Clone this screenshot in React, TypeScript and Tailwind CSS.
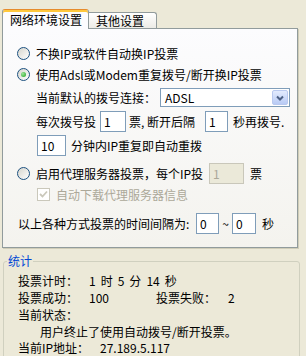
import React from "react";

function Radio({ checked }: { checked?: boolean }) {
  return (
    <span className="w-[13px] h-[13px] shrink-0 rounded-full border border-[#1c5180] bg-gradient-to-br from-[#d6d5cd] to-white flex items-center justify-center">
      {checked && (
        <span className="w-[5px] h-[5px] rounded-full bg-[radial-gradient(circle_at_35%_35%,#9be598,#21a121)]" />
      )}
    </span>
  );
}

function Box({ w, value, disabled }: { w: string; value: string; disabled?: boolean }) {
  return (
    <span
      className={
        disabled
          ? `${w} h-[21px] shrink-0 border border-[#c9c7ba] bg-[#ebe9d9] text-[#aca899] pl-[3px] flex items-center`
          : `${w} h-[21px] shrink-0 border border-[#7f9db9] bg-white pl-[3px] flex items-center`
      }
    >
      {value}
    </span>
  );
}

export default function App() {
  return (
    <div className="w-[306px] h-[356px] overflow-hidden bg-[#ece9d8] text-[12px] leading-[14px] text-black [font-family:'Noto_Sans_CJK_SC',sans-serif]">
      <div className="pl-[2px] pt-[9px] w-[298px]">
        {/* tabs */}
        <div className="flex items-end h-[19px]">
          <div className="relative z-10 w-[87px] h-[20px] -mb-px bg-[#fcfcfe] border border-[#919b9c] border-t-[#e68b2c] border-b-0 rounded-t-[3px] shadow-[inset_0_2px_0_#ffc83c] pl-[7px] pt-[3px]">
            网络环境设置
          </div>
          <div className="w-[68px] h-[16px] border border-l-0 border-b-0 border-[#919b9c] rounded-tr-[3px] bg-gradient-to-b from-white to-[#ecebe6] pl-[7px] pt-[1px]">
            其他设置
          </div>
        </div>

        {/* tab panel */}
        <div className="h-[220px] w-[296px] border border-[#919b9c] bg-gradient-to-b from-[#fcfcfe] to-[#f4f3ee] shadow-[1px_1px_0_#d0cdb8] pt-[18px] flex flex-col">
          <div className="flex items-center h-[13px] pl-[14px]">
            <Radio />
            <span className="ml-[6px]">不换IP或软件自动换IP投票</span>
          </div>

          <div className="flex items-center h-[13px] pl-[14px] mt-[8px]">
            <Radio checked />
            <span className="ml-[6px]">使用Adsl或Modem重复拨号/断开换IP投票</span>
          </div>

          <div className="flex items-center h-[19px] pl-[33px] mt-[7px]">
            <span className="w-[124px]">当前默认的拨号连接：</span>
            <span className="w-[130px] h-[19px] border border-[#7f9db9] bg-white flex items-center justify-between pl-[4px] pr-[1px]">
              <span>ADSL</span>
              <span className="w-[16px] h-[15px] rounded-[2px] border border-[#b9c9ef] bg-gradient-to-b from-[#e3ebfd] to-[#b9cbf5] flex items-center justify-center">
                <svg width="8" height="6" viewBox="0 0 8 6">
                  <path d="M1 1.5 L4 4.5 L7 1.5" fill="none" stroke="#4d6185" strokeWidth="2" />
                </svg>
              </span>
            </span>
          </div>

          <div className="flex items-center h-[21px] pl-[33px] mt-[4px]">
            <span className="w-[64px]">每次拨号投</span>
            <Box w="w-[26px]" value="1" />
            <span className="w-[79px] pl-[3px]">票, 断开后隔</span>
            <Box w="w-[23px]" value="1" />
            <span className="ml-[5px]">秒再拨号.</span>
          </div>

          <div className="flex items-center h-[21px] pl-[34px] mt-[3px]">
            <Box w="w-[29px]" value="10" />
            <span className="ml-[5px]">分钟内IP重复即自动重拨</span>
          </div>

          <div className="flex items-center h-[21px] pl-[14px] mt-[7px]">
            <Radio />
            <span className="ml-[6px] w-[173px]">启用代理服务器投票，每个IP投</span>
            <Box w="w-[35px]" value="1" disabled />
            <span className="ml-[6px]">票</span>
          </div>

          <div className="flex items-center h-[13px] pl-[34px] mt-[4px]">
            <span className="w-[13px] h-[13px] shrink-0 border border-[#cac8bb] bg-white flex items-center justify-center">
              <svg width="9" height="9" viewBox="0 0 9 9">
                <path d="M1 4 L3.5 6.5 L8 1.5" fill="none" stroke="#cac8bb" strokeWidth="1.8" />
              </svg>
            </span>
            <span className="ml-[6px] text-[#aca899]">自动下载代理服务器信息</span>
          </div>

          <div className="flex items-center h-[21px] pl-[15px] mt-[12px]">
            <span className="w-[178px]">以上各种方式投票的时间间隔为:</span>
            <Box w="w-[23px]" value="0" />
            <span className="w-[13px] text-center">~</span>
            <Box w="w-[24px]" value="0" />
            <span className="ml-[6px]">秒</span>
          </div>
        </div>

        {/* stats group */}
        <div className="relative ml-[1px] mt-[13px] w-[297px] h-[110px] border border-[#d0d0bf] rounded-[3px] pl-[14px] pt-[10px]">
          <span className="absolute left-[3px] top-[-8px] px-[1px] bg-[#ece9d8] text-[#0046d5]">统计</span>

          <div className="flex items-center h-[17px]">
            <span className="w-[71px]">投票计时：</span>
            <span className="flex gap-[5px]">
              <span>1</span>
              <span>时</span>
              <span>5</span>
              <span>分</span>
              <span>14</span>
              <span>秒</span>
            </span>
          </div>
          <div className="flex items-center h-[17px]">
            <span className="w-[71px]">投票成功：</span>
            <span className="w-[67px]">100</span>
            <span className="w-[72px]">投票失败：</span>
            <span>2</span>
          </div>
          <div className="flex items-center h-[17px]">当前状态：</div>
          <div className="flex items-center h-[17px] pl-[22px]">用户终止了使用自动拨号/断开投票。</div>
          <div className="flex items-center h-[16px]">
            <span className="w-[82px]">当前IP地址：</span>
            <span>27.189.5.117</span>
          </div>
        </div>
      </div>
    </div>
  );
}
